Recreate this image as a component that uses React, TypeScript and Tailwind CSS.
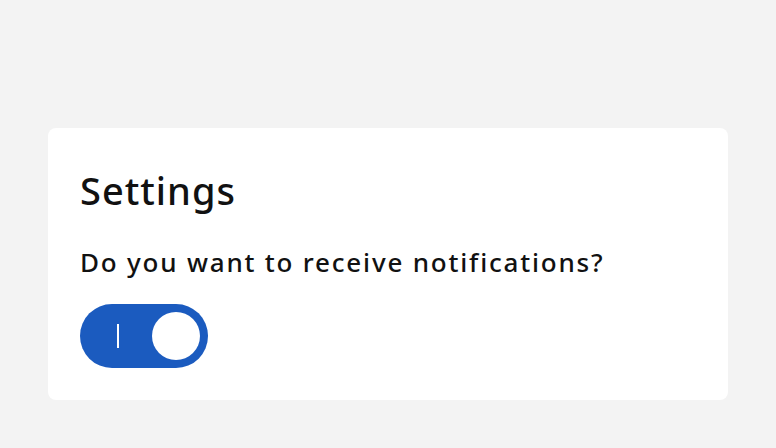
import React, { useState } from "react";

export default function App() {
  const [on, setOn] = useState(true);
  return (
    <div className="min-h-[448px] w-full bg-[#f3f3f3] px-12 pt-32 pb-12" style={{ fontFamily: '"Noto Sans", "Open Sans", sans-serif' }}>
      <div className="rounded-lg bg-white px-8 pt-[32px] pb-8 h-[272px]">
        <h1 className="text-[38px] font-medium leading-[64px] text-[#111] tracking-[1px] -mt-[2px]">Settings</h1>
        <p className="mt-[24px] text-[26px] font-medium leading-[32px] text-[#111] tracking-[1.8px]">Do you want to receive notifications?</p>
        <button
          onClick={() => setOn(!on)}
          className="mt-[26px] relative flex h-16 w-32 items-center rounded-full bg-[#1b5bbf]"
        >
          <span className="absolute left-[37px] top-[20px] h-6 w-[2px] bg-white" />
          <span className="absolute right-2 top-2 h-12 w-12 rounded-full bg-white" />
        </button>
      </div>
    </div>
  );
}
